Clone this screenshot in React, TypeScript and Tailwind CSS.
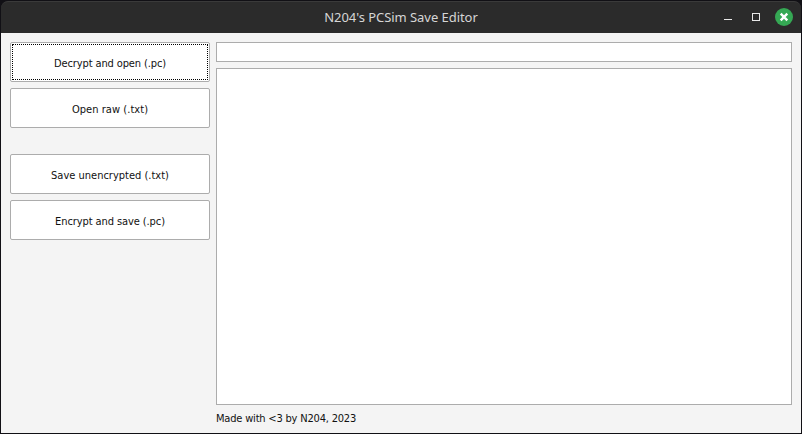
import type { ReactNode } from "react";

type ActionButtonProps = { children: ReactNode; focused?: boolean; className?: string };

function ActionButton({ children, focused = false, className = "" }: ActionButtonProps) {
  return (
    <button
      type="button"
      className={`flex h-10 w-[200px] rounded-[2px] border border-[#acacac] bg-white p-px text-[#111] outline-none ${className}`}
    >
      <span className={`flex h-full w-full items-center justify-center whitespace-nowrap border border-dotted pt-[3px] ${focused ? "border-black" : "border-transparent"}`}>
        {children}
      </span>
    </button>
  );
}

function TitleBar() {
  return (
    <header className="relative flex h-8 shrink-0 items-start justify-end rounded-t-[7px] border-t border-[#3a3a3a] bg-[#2b2b2b] pt-1.5 pr-2">
      <h1 className="absolute inset-x-0 top-[5px] text-center font-['Noto_Sans',sans-serif] text-[13px] leading-5 tracking-[-0.05px] text-[#d6d6d6]">
        N204's PCSim Save Editor
      </h1>
      <svg width="70" height="18" viewBox="0 0 70 18" fill="none" aria-hidden="true">
        <path d="M1 11.5h8" stroke="#e8e8e8" />
        <rect x="29.5" y="5.5" width="7" height="7" stroke="#e8e8e8" />
        <circle cx="61" cy="9" r="9" fill="#35a854" />
        <path d="m57.7 5.7 6.6 6.6m0-6.6-6.6 6.6" stroke="white" strokeWidth="2.4" />
      </svg>
    </header>
  );
}

export default function App() {
  return (
    <div className="h-[434px] w-[802px] bg-[#111015] p-px font-['DejaVu_Sans_Condensed','DejaVu_Sans',sans-serif] text-[11px] leading-4">
      <div className="flex h-full flex-col overflow-hidden">
        <TitleBar />
        <main className="flex flex-1 gap-1.5 bg-[#f4f4f4] pt-[9px] pr-[9px] pl-[9px]">
          <nav className="flex w-[200px] shrink-0 flex-col gap-1.5">
            <ActionButton focused className="tracking-[-0.12px]">Decrypt and open (.pc)</ActionButton>
            <ActionButton className="tracking-[0.05px]">Open raw (.txt)</ActionButton>
            <ActionButton className="mt-5">Save unencrypted (.txt)</ActionButton>
            <ActionButton className="tracking-[-0.09px]">Encrypt and save (.pc)</ActionButton>
          </nav>
          <section className="flex flex-1 flex-col">
            <input aria-label="File path" className="h-5 border border-[#acacac] bg-white px-1 outline-none" />
            <textarea aria-label="Save contents" className="mt-1.5 h-[337px] resize-none border border-[#acacac] bg-white p-1 outline-none" />
            <p className="mt-1.5 whitespace-nowrap tracking-[-0.19px] text-[#111]">Made with &lt;3 by N204, 2023</p>
          </section>
        </main>
      </div>
    </div>
  );
}
